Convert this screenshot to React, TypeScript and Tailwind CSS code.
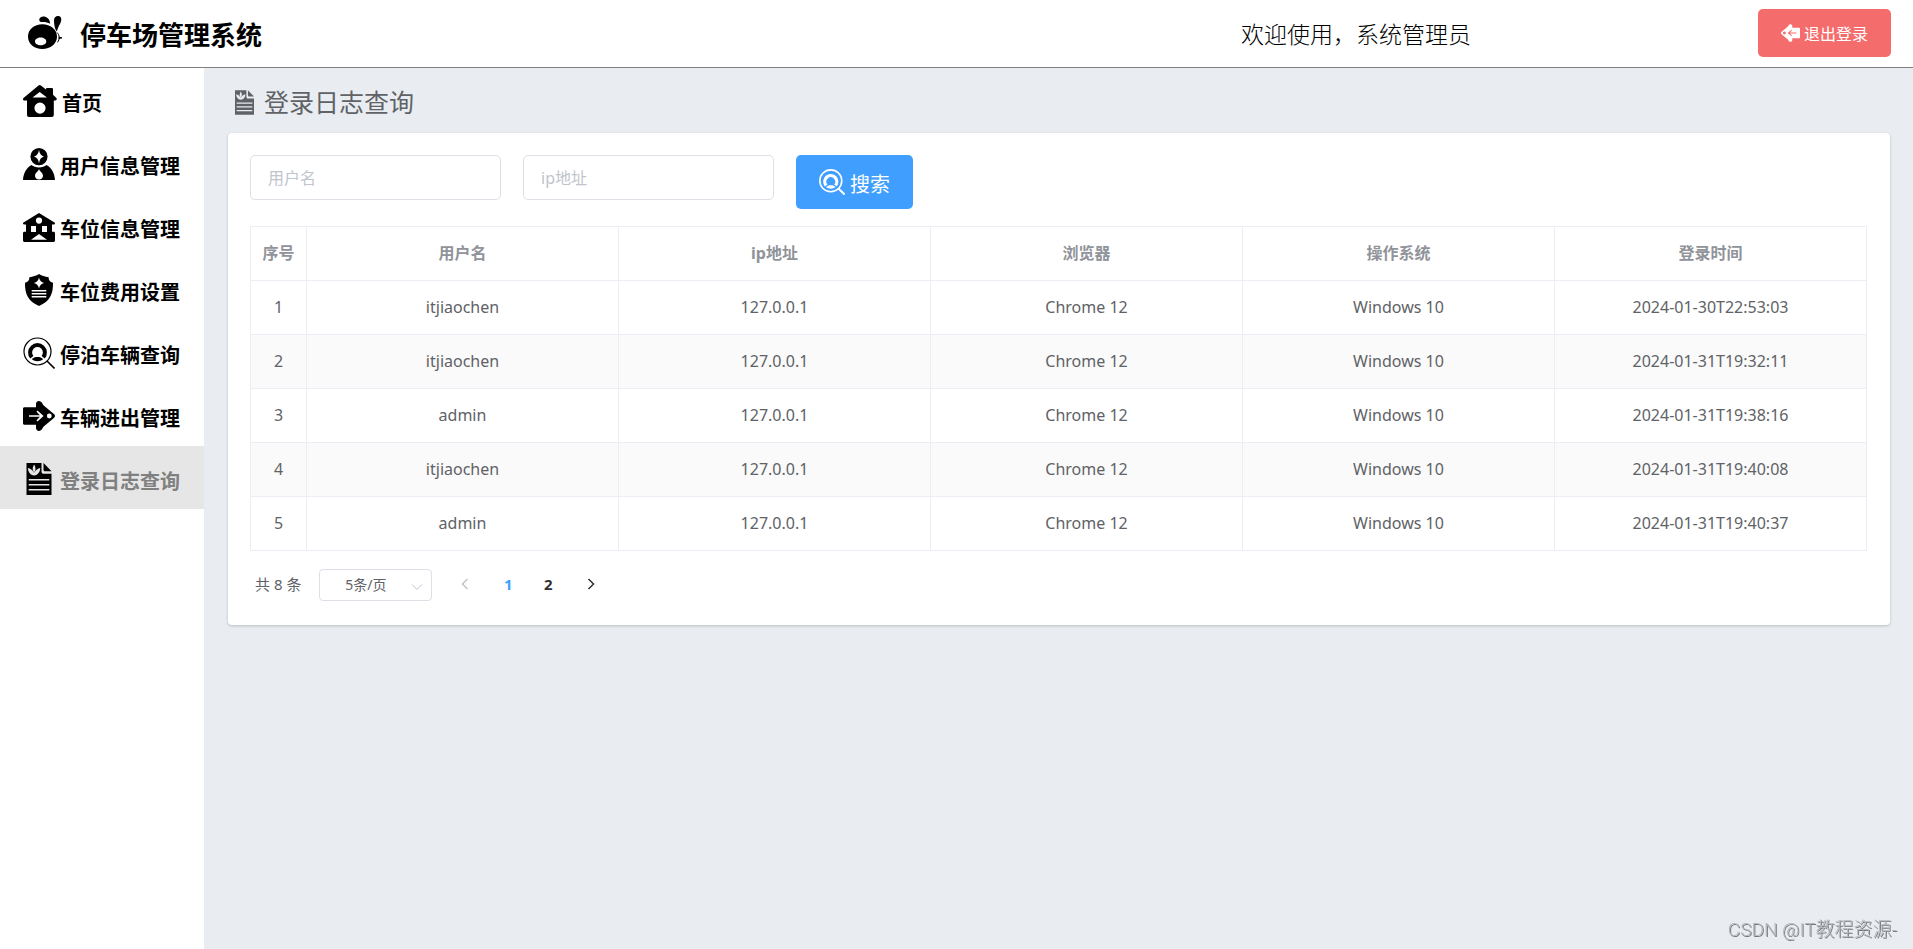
import { useState } from 'react';
import type { ReactNode } from 'react';

type IconProps = { className?: string };

function LogoIcon({ className }: IconProps) {
  return (
    <svg viewBox="0 0 34 33" fill="currentColor" className={className} aria-hidden="true">
      <path d="M11.3 3.2C12 .8 14.600 0 17.200 .8c2.800.9 4.600 3 5 6.900-2.600-1.300-5.600-1.900-9-1.600-1.400-.5-2.200-1.600-1.900-2.900Z" />
      <path d="M26 4.500C26 1.500 27.600 0 30 0c2.600 0 3.700 1.900 3.200 4.500-.5 2.900-2.100 4.700-3 7-.5 1.400-.9 2.700-1.500 3.900-.7-1.400-1.600-2.400-2-4.400-.4-2.200-.7-4.300-.7-6.500Z" />
      <path fillRule="evenodd" d="M14.300 8.300C22.500 8.300 29 13.200 29 20.600S22.500 33 14.300 33 0 28 0 20.600 6.400 8.300 14.300 8.300Zm-1.600 13.300c-3.200 0-5.700 1.700-5.700 3.900s2.500 3.700 5.700 3.700 5.600-1.500 5.600-3.700-2.400-3.900-5.600-3.900Z" />
      <path d="M29 16.500c2.800 2.800 3 6.600.4 9.900M30.500 21.200l3.500.6-3.500.8" fill="none" stroke="currentColor" strokeWidth="1" />
    </svg>
  );
}

function HomeIcon({ className }: IconProps) {
  return (
    <svg viewBox="0 0 34 32" fill="currentColor" className={className} aria-hidden="true">
      <path
        fillRule="evenodd"
        d="M15.500.5a2 2 0 0 1 2.400 0l5.100 4V4.200c0-.8.5-1.200 1.200-1.200h4.600c.7 0 1.200.4 1.200 1.200v5.600l3.400 3.300c.8.9.2 2.400-1 2.400h-1.600V30a2 2 0 0 1-2 2H6a2 2 0 0 1-2-2V15.500H1.500c-1.400 0-2-1.500-1-2.400ZM16.700 7l-7.200 5.500H24ZM17 17.500a5.600 5.600 0 1 0 0 11.200 5.600 5.600 0 0 0 0-11.200Z"
      />
    </svg>
  );
}

function UserIcon({ className }: IconProps) {
  return (
    <svg viewBox="0 0 32 32" fill="currentColor" className={className} aria-hidden="true">
      <path
        fillRule="evenodd"
        d="M16 0a8.600 8.600 0 1 1 0 17.200A8.600 8.600 0 0 1 16 0Zm0 2c-.6 3.600-2 5.600-5 6.600 3 1 4.400 3 5 6.600.6-3.600 2-5.600 5-6.600-3-1-4.400-3-5-6.600Z"
      />
      <path
        fillRule="evenodd"
        d="M8.400 17c2 1.600 4.500 2.500 7.600 2.500s5.600-.9 7.600-2.500c5.400 3.300 8 8.500 8.400 15H0c.4-6.500 3-11.700 8.400-15ZM16 21c-.8 2.600-4 3.900-4 6.700 0 2.200 1.700 3.700 4 3.700s4-1.500 4-3.700c0-2.800-3.200-4.100-4-6.700Z"
      />
    </svg>
  );
}

function BuildingIcon({ className }: IconProps) {
  return (
    <svg viewBox="0 0 32 29" fill="currentColor" className={className} aria-hidden="true">
      <path
        fillRule="evenodd"
        d="M16 0l15.500 9.500c1 .8.600 2-.6 2H29v7.300h1.500c.9 0 1.500.6 1.500 1.400v7c0 1-.7 1.800-1.700 1.800H1.700C.7 29 0 28.200 0 27.200v-7c0-.8.600-1.400 1.500-1.400H3v-7.300H1.100c-1.200 0-1.600-1.200-.6-2ZM16 4.500a3.100 3.100 0 1 0 0 6.200 3.100 3.100 0 0 0 0-6.200ZM8 13v6h5v-6Zm11 0v6h5v-6Zm-3 8-8 5.700h16Z"
      />
    </svg>
  );
}

function ShieldIcon({ className }: IconProps) {
  return (
    <svg viewBox="0 0 32 32" fill="currentColor" className={className} aria-hidden="true">
      <path
        fillRule="evenodd"
        d="M16 0c2.800 1.800 6 2.800 9.600 3.200 0 2.800 1.200 4.500 4.400 5.600C30.200 20 27 27.500 16 32 5 27.500 1.800 20 2 8.800c3.200-1.100 4.400-2.800 4.400-5.600C10 2.800 13.200 1.800 16 0Zm0 3.500c-.6 3-2 4.700-5.200 5.500 3.200.8 4.600 2.500 5.200 5.500.6-3 2-4.700 5.200-5.500-3.200-.8-4.600-2.500-5.200-5.500ZM8.700 16v1.500h14.600V16Zm0 3v1.500h14.600V19Zm0 3v1.500h14.600V22Z"
      />
    </svg>
  );
}

function SearchUserIcon({ className, rim = 1.2 }: IconProps & { rim?: number }) {
  return (
    <svg viewBox="0 0 32 32" fill="none" stroke="currentColor" className={className} aria-hidden="true">
      <circle cx="14.500" cy="14.500" r="13.500" strokeWidth={rim} />
      <path d="M24 24l7.500 7.500" strokeWidth={rim + 0.4} />
      <path d="M8.800 20.200a7.400 7.400 0 1 1 11.400 0" strokeWidth="4" />
      <path d="M8.800 22.300c1.400-1.900 3.300-2.400 5.700-2.400s4.300.5 5.700 2.400c-3.200 2.500-8.200 2.500-11.400 0Z" fill="currentColor" stroke="none" />
    </svg>
  );
}

function ArrowIcon({ className }: IconProps) {
  return (
    <svg viewBox="0 0 32 30" fill="currentColor" className={className} aria-hidden="true">
      <path
        fillRule="evenodd"
        d="M1.500 6.300H13V3.200C13 .5 15.700-.9 17.900.8c2 1.500 1.600 2.900 3.400 4.300l9.600 8c1.500 1.200 1.500 2.600 0 3.800l-9.600 8c-1.800 1.400-1.400 2.800-3.400 4.300-2.200 1.700-4.900.3-4.900-2.400v-3.100H1.500c-.9 0-1.500-.6-1.500-1.500V7.800c0-.9.600-1.500 1.500-1.500ZM14.500 9.500l-1 1.300 3.400 3.400H6v1.600h10.900l-3.400 3.400 1 1.300L20.600 15ZM26.300 12.600a2.400 2.400 0 1 0 0 4.800 2.400 2.400 0 0 0 0-4.800Z"
      />
    </svg>
  );
}

function LogIcon({ className }: IconProps) {
  return (
    <svg viewBox="0 0 25 32" fill="currentColor" className={className} aria-hidden="true">
      <path d="M17 0l8 8.200h-6.500A1.500 1.500 0 0 1 17 6.700Z" />
      <path
        fillRule="evenodd"
        d="M0 0h15v8.500c0 1.400.9 2.300 2.300 2.300H25V32H0ZM7.600 1.500C5.700 4.500 5.700 7 7.600 9.500 9.500 7 9.500 4.500 7.600 1.500ZM1.500 5c0 4 2.300 7 6.100 7.500 3.800-.5 6.100-3.500 6.100-7.500-2.400.4-4.300 1.800-6.100 4.800C5.800 6.800 3.900 5.400 1.500 5ZM2.200 16v1.500h20.600V16Zm0 5v1.500h20.600V21Zm0 5v1.500h20.600V26Z"
      />
    </svg>
  );
}

function Chevron({ d, className }: { d: string; className?: string }) {
  return (
    <svg viewBox="0 0 12 12" fill="none" stroke="currentColor" className={className} aria-hidden="true">
      <path d={d} />
    </svg>
  );
}

const menu: { label: string; icon: ReactNode; active?: boolean }[] = [
  { label: '首页', icon: <HomeIcon className="h-8 w-[34px]" /> },
  { label: '用户信息管理', icon: <UserIcon className="size-8" /> },
  { label: '车位信息管理', icon: <BuildingIcon className="h-[29px] w-8" /> },
  { label: '车位费用设置', icon: <ShieldIcon className="size-8" /> },
  { label: '停泊车辆查询', icon: <SearchUserIcon className="size-8" /> },
  { label: '车辆进出管理', icon: <ArrowIcon className="h-[30px] w-8" /> },
  { label: '登录日志查询', icon: <LogIcon className="mx-[3px] h-8 w-[26px]" />, active: true },
];

const columns = ['用户名', 'ip地址', '浏览器', '操作系统', '登录时间'];

const rows = [
  ['itjiaochen', '127.0.0.1', 'Chrome 12', 'Windows 10', '2024-01-30T22:53:03'],
  ['itjiaochen', '127.0.0.1', 'Chrome 12', 'Windows 10', '2024-01-31T19:32:11'],
  ['admin', '127.0.0.1', 'Chrome 12', 'Windows 10', '2024-01-31T19:38:16'],
  ['itjiaochen', '127.0.0.1', 'Chrome 12', 'Windows 10', '2024-01-31T19:40:08'],
  ['admin', '127.0.0.1', 'Chrome 12', 'Windows 10', '2024-01-31T19:40:37'],
];

function Header() {
  return (
    <header className="flex h-17 items-center border-b border-[#808080] bg-white pr-[22px] pb-0.5 pl-7 text-black">
      <LogoIcon className="h-[33px] w-[34px]" />
      <h1 className="ml-[18px] pt-1 text-[26px] leading-9 font-bold">停车场管理系统</h1>
      <p className="ml-auto pt-0.5 text-[23px] leading-8 font-light">欢迎使用，系统管理员</p>
      <div className="flex w-[420px] justify-end">
        <button type="button" className="flex h-12 items-center gap-1 rounded-[5px] bg-[#f56c6c] px-[23px] text-base text-white">
          <ArrowIcon className="h-[18px] w-[19px] rotate-180" />
          <span className="pt-0.5">退出登录</span>
        </button>
      </div>
    </header>
  );
}

function Sidebar() {
  return (
    <nav className="w-51 shrink-0 bg-white">
      <ul>
        {menu.map((item) => (
          <li key={item.label}>
            <a
              href="#"
              className={`flex h-[63px] items-center gap-[5px] pt-[3px] pl-[23px] text-black ${item.active ? 'bg-[#e6e6e6]' : ''}`}
            >
              {item.icon}
              <span className={`pt-1.5 text-xl leading-7 font-bold ${item.active ? 'text-[#808080]' : ''}`}>{item.label}</span>
            </a>
          </li>
        ))}
      </ul>
    </nav>
  );
}

function SearchForm() {
  const field = 'h-[45px] w-[251px] rounded-[5px] border border-[#dcdfe6] px-[17px] text-base text-[#606266] outline-none placeholder:text-[#c0c4cc]';
  return (
    <form className="flex items-start gap-[22px]" onSubmit={(e) => e.preventDefault()}>
      <input type="text" aria-label="用户名" placeholder="用户名" className={field} />
      <input type="text" aria-label="ip地址" placeholder="ip地址" className={field} />
      <button type="submit" className="flex h-[54px] items-center gap-[5px] rounded-[5px] bg-[#409eff] px-[23px] text-xl text-white">
        <SearchUserIcon className="size-[26px]" rim={2} />
        <span className="pt-1.5">搜索</span>
      </button>
    </form>
  );
}

function LogTable() {
  const cell = 'border border-[#ebeef5] pb-0.5';
  return (
    <table className="mt-[17px] w-full table-fixed border-collapse text-center text-base text-[#606266]">
      <thead>
        <tr className="h-[54px] text-[#909399]">
          <th scope="col" className={`w-14 font-bold ${cell}`}>序号</th>
          {columns.map((c) => (
            <th key={c} scope="col" className={`font-bold ${cell}`}>{c}</th>
          ))}
        </tr>
      </thead>
      <tbody>
        {rows.map((row, i) => (
          <tr key={row[4]} className="h-[54px] even:bg-[#fafafa]">
            <td className={cell}>{i + 1}</td>
            {row.map((value, j) => (
              <td key={columns[j]} className={cell}>{value}</td>
            ))}
          </tr>
        ))}
      </tbody>
    </table>
  );
}

function Pagination() {
  const [page, setPage] = useState(1);
  const pageColor = (n: number) => (n === page ? 'text-[#409eff]' : 'text-[#303133]');
  return (
    <div className="mt-[18px] flex h-8 items-center pl-[5px] text-[#606266]">
      <span className="pb-0.5 text-[15px]">共 8 条</span>
      <div className="relative ml-[18px]">
        <select
          aria-label="每页条数"
          className="h-8 w-[113px] appearance-none rounded-[4px] border border-[#dcdfe6] bg-white pr-5 text-center text-sm outline-none"
        >
          <option>5条/页</option>
          <option>10条/页</option>
        </select>
        <Chevron d="M1 3.500l5 5 5-5" className="pointer-events-none absolute top-3 right-[9px] size-3 text-[#c0c4cc]" />
      </div>
      <button type="button" aria-label="上一页" disabled={page === 1} onClick={() => setPage(1)} className="ml-[13px] flex size-10 items-center justify-center pb-0.5 text-[#303133] disabled:text-[#c0c4cc]">
        <Chevron d="M8.500 1L3.500 6 8.500 11" className="size-3 stroke-[1.500]" />
      </button>
      <div className="ml-[3px] flex text-[15px] font-bold">
        <button type="button" onClick={() => setPage(1)} className={`h-8 w-10 pb-0.5 ${pageColor(1)}`}>1</button>
        <button type="button" onClick={() => setPage(2)} className={`h-8 w-10 pb-0.5 ${pageColor(2)}`}>2</button>
      </div>
      <button type="button" aria-label="下一页" onClick={() => setPage(2)} className="ml-[3px] flex size-10 items-center justify-center pb-0.5 text-[#303133]">
        <Chevron d="M3.500 1L8.500 6 3.500 11" className="size-3 stroke-[1.500]" />
      </button>
    </div>
  );
}

export default function App() {
  return (
    <div className="flex min-h-screen flex-col bg-[#e9edf2] font-['Noto_Sans','Noto_Sans_CJK_SC',sans-serif]">
      <Header />
      <div className="flex grow">
        <Sidebar />
        <main className="min-w-0 grow pt-[18px] pr-[23px] pl-6">
          <h2 className="flex h-8 items-center gap-2.5 pl-[7px] text-[25px] leading-8 text-[#606266]">
            <LogIcon className="h-[25px] w-[19px]" />
            登录日志查询
          </h2>
          <section className="mt-[15px] rounded-[4px] bg-white pt-[22px] pr-[23px] pb-6 pl-[22px] shadow-[0_1px_3px_rgba(0,0,0,0.2)]">
            <SearchForm />
            <LogTable />
            <Pagination />
          </section>
        </main>
      </div>
      <p className="pointer-events-none fixed right-4 bottom-[7px] font-[Roboto,'Noto_Sans_CJK_SC',sans-serif] text-[19px] leading-6 font-light text-[#b4b7bb] [text-shadow:1px_1px_0_#76787b]">
        CSDN @IT教程资源-
      </p>
    </div>
  );
}
